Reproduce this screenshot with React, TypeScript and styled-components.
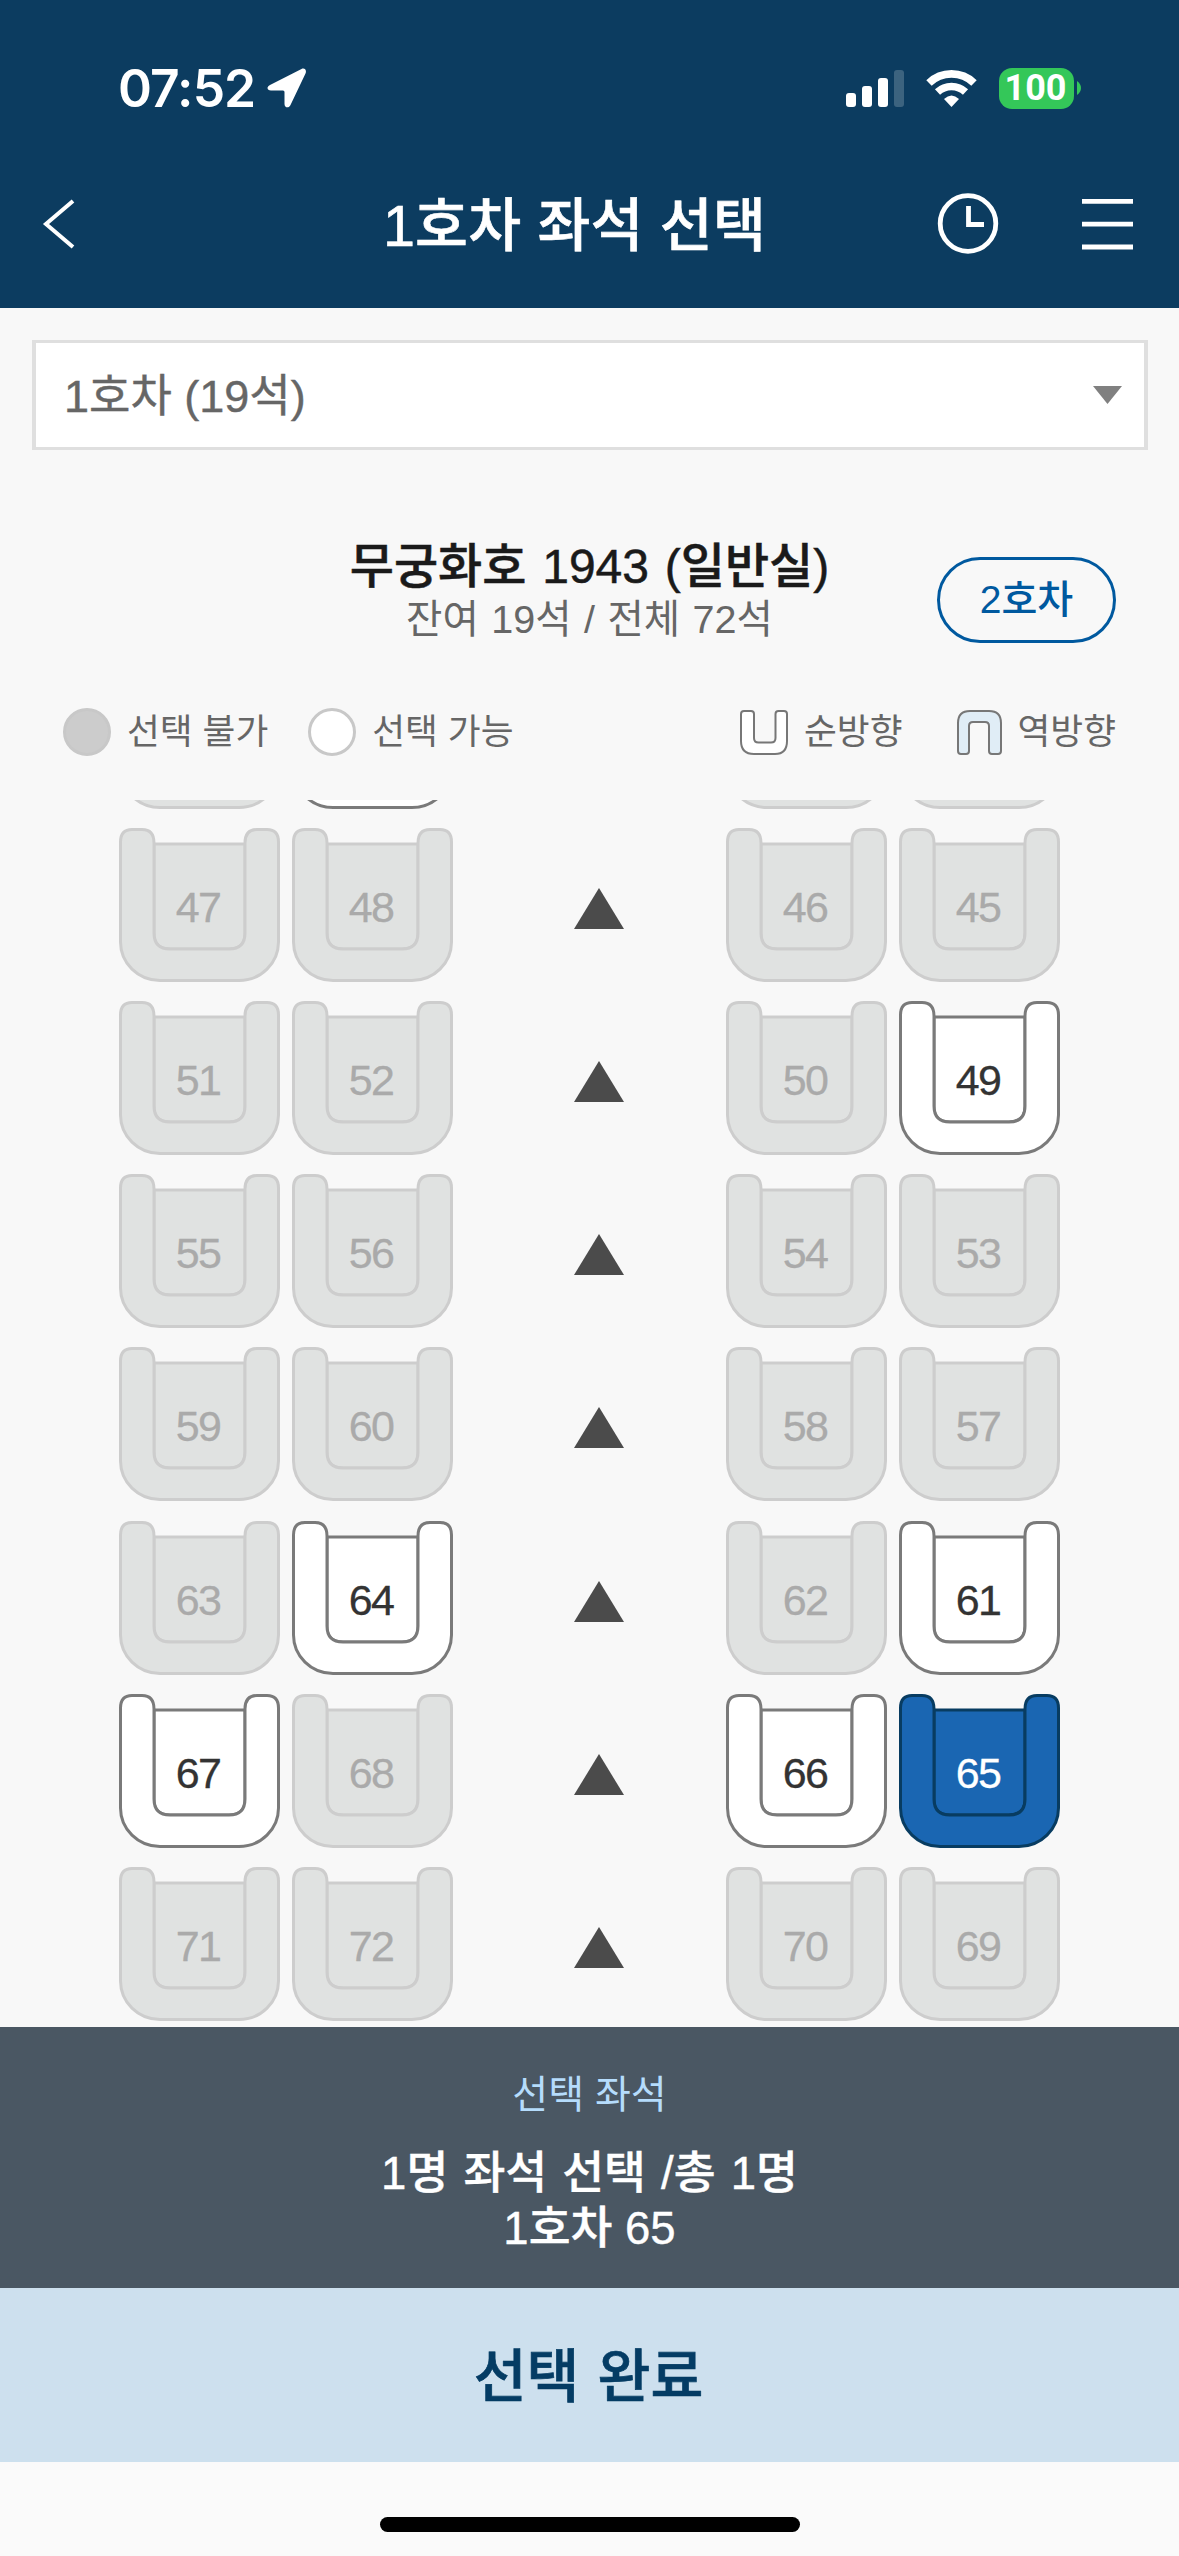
import React, { useState } from 'react';
import styled, { createGlobalStyle } from 'styled-components';

const GlobalStyle = createGlobalStyle`
  * {
    box-sizing: border-box;
  }

  body {
    margin: 0;
    background: #f8f8f8;
    font-family: 'Liberation Sans', 'Noto Sans CJK KR', sans-serif;
  }

  button {
    border: 0;
    padding: 0;
    background: none;
    font-family: inherit;
  }
`;

const Screen = styled.div`
  display: flex;
  flex-direction: column;
  width: 1179px;
  height: 2556px;
  overflow: hidden;
  background: #f8f8f8;
`;

const Header = styled.header`
  height: 308px;
  background: #0c3c60;
  color: #fff;
`;

const StatusBar = styled.div`
  display: flex;
  align-items: center;
  height: 140px;
  padding: 36px 98px 0 118px;
`;

const Time = styled.span`
  width: 149px;
  font-family: Inter, sans-serif;
  font-size: 51.5px;
  font-weight: 600;
  letter-spacing: -0.9px;
  line-height: 60px;
`;

const StatusIcons = styled.div`
  display: flex;
  align-items: center;
  margin-left: auto;
`;

const Battery = styled.div`
  display: flex;
  align-items: center;
  justify-content: center;
  width: 75px;
  height: 41px;
  margin: 0 3px 0 22px;
  padding-right: 2px;
  border-radius: 13px;
  background: #34c759;
  font-family: Roboto, sans-serif;
  font-size: 36px;
  font-weight: 700;
`;

const TitleBar = styled.div`
  display: grid;
  grid-template-columns: 242px 1fr 242px;
  align-items: center;
  height: 168px;
`;

const BackButton = styled.button`
  display: flex;
  padding-left: 42px;
`;

const Title = styled.h1`
  margin: 0;
  padding: 4px 30px 0 0;
  font-size: 57.5px;
  font-weight: 500;
  line-height: 84px;
  letter-spacing: 0.2px;
  text-align: center;
  white-space: nowrap;
  -webkit-text-stroke: 0.6px;
`;

const HeaderActions = styled.div`
  display: flex;
  align-items: center;
  gap: 83px;
  margin-left: -0.5px;
`;

const CarSelect = styled.button`
  display: flex;
  align-items: center;
  justify-content: space-between;
  height: 110px;
  margin: 32px 31px 0 32px;
  padding: 0 22px 0 28px;
  border: solid #dfdfdf;
  border-width: 3px 4px;
  background: #fff;
  color: #666;
  font-size: 45px;
  line-height: 64px;

  span {
    padding-top: 4px;
    -webkit-text-stroke: 0.4px;
  }
`;

const TrainInfo = styled.section`
  display: grid;
  grid-template-columns: 242px 1fr 242px;
  height: 213px;
  padding-top: 85px;
`;

const TrainText = styled.div`
  grid-column: 2;
  text-align: center;
  white-space: nowrap;
`;

const TrainName = styled.h2`
  margin: 0;
  color: #1a1a1a;
  font-size: 48px;
  font-weight: 500;
  line-height: 64px;
  word-spacing: 2.5px;
  -webkit-text-stroke: 0.5px;
`;

const TrainSeats = styled.p`
  margin: 0;
  color: #666;
  font-size: 39.5px;
  line-height: 40px;
  word-spacing: 1.5px;
`;

const NextCarButton = styled.button`
  width: 179px;
  height: 86px;
  margin-top: 22px;
  border: 3px solid #00599f;
  border-radius: 43px;
  color: #00599f;
  font-size: 39px;
  font-weight: 500;
  line-height: 80px;
`;

const Legend = styled.div`
  display: flex;
  align-items: center;
  justify-content: space-between;
  height: 137px;
  padding: 0 63px;
`;

const LegendGroup = styled.div<{ $gap: number }>`
  display: flex;
  gap: ${({ $gap }) => $gap}px;
`;

const LegendItem = styled.div`
  display: flex;
  align-items: center;
  gap: 16px;
  padding-top: 1px;
  color: #666;
  font-size: 35.7px;
  line-height: 50px;
  white-space: nowrap;
`;

const Dot = styled.span<{ $fill: string }>`
  width: 48px;
  height: 48px;
  border: 3px solid #c8c8c8;
  border-radius: 50%;
  background: ${({ $fill }) => $fill};
`;

const SeatMap = styled.main`
  display: flex;
  flex-direction: column;
  justify-content: flex-end;
  height: 1227px;
  overflow: hidden;
  padding: 0 119px;
`;

const SeatRow = styled.div`
  display: grid;
  flex: none;
  grid-template-columns: 334px 1fr 334px;
  height: 173.2px;

  &:last-child {
    height: 160px;
  }
`;

const SeatPair = styled.div`
  display: flex;
  justify-content: space-between;
`;

const Aisle = styled.div`
  display: flex;
  justify-content: center;
  padding: 60px 0 0 19px;
`;

type SeatStatus = 'blocked' | 'open' | 'picked';

const seatColors = {
  blocked: { fill: '#e0e2e1', line: '#cdcdcd', text: '#aaaaaa' },
  open: { fill: '#ffffff', line: '#7a7a7a', text: '#333333' },
  picked: { fill: '#1a66b2', line: '#083c61', text: '#ffffff' },
};

const SeatButton = styled.button<{ $status: SeatStatus }>`
  display: grid;
  width: 161px;
  height: 154px;
  color: ${({ $status }) => seatColors[$status].text};
  font-size: 43px;
  letter-spacing: -1.6px;

  svg,
  span {
    grid-area: 1 / 1;
  }

  svg {
    fill: ${({ $status }) => seatColors[$status].fill};
    stroke: ${({ $status }) => seatColors[$status].line};
  }

  span {
    padding: 54px 3px 0 0;
    line-height: 50px;
    -webkit-text-stroke: 0.3px;
  }
`;

const Summary = styled.section`
  height: 261px;
  padding-top: 38px;
  background: #4a5763;
  color: #fff;
  text-align: center;
`;

const SummaryLabel = styled.p`
  margin: 0 0 21px;
  color: #b5dcfc;
  font-size: 39px;
  line-height: 60px;
`;

const SummaryLine = styled.p<{ $wordSpacing?: number }>`
  margin: 0;
  font-size: 45.5px;
  font-weight: 500;
  line-height: 55px;
  word-spacing: ${({ $wordSpacing = 0 }) => $wordSpacing}px;
  -webkit-text-stroke: 0.4px;
`;

const ConfirmButton = styled.button`
  height: 174px;
  padding: 0 2px 6px 0;
  background: #cde0ee;
  color: #043c64;
  font-size: 57.5px;
  font-weight: 500;
  word-spacing: 2px;
  -webkit-text-stroke: 0.7px;
`;

const HomeArea = styled.footer`
  display: flex;
  justify-content: center;
  height: 94px;
  padding-top: 55px;
  background: #fafafa;
`;

const HomeIndicator = styled.div`
  width: 420px;
  height: 15px;
  border-radius: 8px;
  background: #000;
`;

const rows = [
  [43, 44, 42, 41],
  [47, 48, 46, 45],
  [51, 52, 50, 49],
  [55, 56, 54, 53],
  [59, 60, 58, 57],
  [63, 64, 62, 61],
  [67, 68, 66, 65],
  [71, 72, 70, 69],
];

const openSeats = [44, 49, 61, 64, 65, 66, 67];

// rows before this index are scrolled under the legend
const firstVisibleRow = 1;

function LocationIcon() {
  return (
    <svg width="40" height="40" viewBox="0 0 40 40" fill="#fff">
      <path d="M34.500 1 L3 17 C-.8 19 0 22.500 4 22.500 H16 Q17.500 22.500 17.500 24 V36 C17.500 40 22 40.500 23.500 37 L38.500 5.500 C40 2 37.500 -.5 34.500 1 Z" />
    </svg>
  );
}

function SignalIcon() {
  return (
    <svg width="58" height="37" viewBox="0 0 58 37" fill="#fff">
      <rect x="0" y="23" width="10" height="14" rx="3" />
      <rect x="16" y="16" width="10" height="21" rx="3" />
      <rect x="32" y="8" width="10" height="29" rx="3" />
      <rect x="48" y="0" width="10" height="37" rx="3" opacity="0.2" />
    </svg>
  );
}

function WifiIcon() {
  return (
    <svg width="51" height="37" viewBox="0 0 51 37" fill="none" stroke="#fff">
      <path d="M3 13 A32.500 32.500 0 0 1 48 13" strokeWidth="7.800" />
      <path d="M11.500 22 A20.500 20.500 0 0 1 39.500 22" strokeWidth="7.500" />
      <path d="M25.500 37 L18 29 Q25.500 22 33 29 Z" fill="#fff" stroke="none" />
    </svg>
  );
}

function Seat({
  number,
  status,
  showNumber,
  onClick,
}: {
  number: number;
  status: SeatStatus;
  showNumber: boolean;
  onClick: () => void;
}) {
  return (
    <SeatButton $status={status} disabled={status === 'blocked'} onClick={onClick}>
      <svg width="161" height="154" viewBox="0 0 161 154" strokeWidth="3">
        <path d="M35 16 H126 V106 Q126 121 110 121 H51 Q35 121 35 106 Z" />
        <path d="M1.500 14 Q1.500 1.500 13 1.500 H23 Q35 1.500 35 15 V105 Q35 121 51 121 H110 Q126 121 126 105 V15 Q126 1.500 138 1.500 H148 Q159.500 1.500 159.500 14 V114 C159.500 135 142 152.500 120 152.500 H41 C19 152.500 1.500 135 1.500 114 Z" />
      </svg>
      {showNumber && <span>{number}</span>}
    </SeatButton>
  );
}

function App() {
  const [selected, setSelected] = useState(65);

  const getStatus = (seat: number): SeatStatus => {
    if (seat === selected) return 'picked';
    return openSeats.includes(seat) ? 'open' : 'blocked';
  };

  const renderSeats = (seats: number[], rowIndex: number) =>
    seats.map((seat) => (
      <Seat
        key={seat}
        number={seat}
        status={getStatus(seat)}
        showNumber={rowIndex >= firstVisibleRow}
        onClick={() => setSelected(seat)}
      />
    ));

  return (
    <>
      <GlobalStyle />
      <Screen>
        <Header>
          <StatusBar>
            <Time>07:52</Time>
            <LocationIcon />
            <StatusIcons>
              <SignalIcon />
              <svg width="22" height="1" />
              <WifiIcon />
              <Battery>100</Battery>
              <svg width="4" height="14" viewBox="0 0 4 14" fill="#34c759">
                <path d="M0 0 Q4 3 4 7 Q4 11 0 14 Z" />
              </svg>
            </StatusIcons>
          </StatusBar>
          <TitleBar>
            <BackButton>
              <svg width="34" height="50" viewBox="0 0 34 50" fill="none" stroke="#fff" strokeWidth="4">
                <path d="M31 2 L4 25 L31 48" />
              </svg>
            </BackButton>
            <Title>1호차 좌석 선택</Title>
            <HeaderActions>
              <svg width="62" height="62" viewBox="0 0 62 62" fill="none" stroke="#fff" strokeWidth="4.800">
                <circle cx="31" cy="30.500" r="27.800" />
                <path d="M31.500 13 V31.500 H47" />
              </svg>
              <svg width="51" height="51" viewBox="0 0 51 51" stroke="#fff" strokeWidth="4.800">
                <path d="M0 2.400 H51 M0 25.200 H51 M0 48 H51" />
              </svg>
            </HeaderActions>
          </TitleBar>
        </Header>

        <CarSelect>
          <span>1호차 (19석)</span>
          <svg width="29" height="18" viewBox="0 0 29 18" fill="#808080">
            <path d="M0 0 H29 L14.500 18 Z" />
          </svg>
        </CarSelect>

        <TrainInfo>
          <TrainText>
            <TrainName>무궁화호 1943 (일반실)</TrainName>
            <TrainSeats>잔여 19석 / 전체 72석</TrainSeats>
          </TrainText>
          <NextCarButton>2호차</NextCarButton>
        </TrainInfo>

        <Legend>
          <LegendGroup $gap={40}>
            <LegendItem>
              <Dot $fill="#cccccc" />
              선택 불가
            </LegendItem>
            <LegendItem>
              <Dot $fill="#ffffff" />
              선택 가능
            </LegendItem>
          </LegendGroup>
          <LegendGroup $gap={54}>
            <LegendItem>
              <svg width="48" height="45" viewBox="0 0 48 45" fill="#fff" stroke="#777" strokeWidth="2">
                <path d="M1 4 Q1 1 4 1 H11 Q14 1 14 4 V28 Q14 32.500 18.500 32.500 H31 Q35.500 32.500 35.500 28 V4 Q35.500 1 38.500 1 H44 Q47 1 47 4 V31 Q47 44 35 44 H14 Q1 44 1 31 Z" />
              </svg>
              순방향
            </LegendItem>
            <LegendItem>
              <svg width="45" height="45" viewBox="0 0 45 45" fill="#e0edf6" stroke="#777" strokeWidth="2">
                <path d="M1 41 Q1 44 4 44 H9 Q12 44 12 41 V16 Q12 12 16 12 H28 Q32 12 32 16 V41 Q32 44 35 44 H41 Q44 44 44 41 V13 Q44 1 32 1 H13 Q1 1 1 13 Z" />
              </svg>
              역방향
            </LegendItem>
          </LegendGroup>
        </Legend>

        <SeatMap>
          {rows.map((row, index) => (
            <SeatRow key={row[0]}>
              <SeatPair>{renderSeats(row.slice(0, 2), index)}</SeatPair>
              <Aisle>
                <svg width="50" height="41" viewBox="0 0 50 41" fill="#4b4b4b">
                  <path d="M25 0 L50 41 H0 Z" />
                </svg>
              </Aisle>
              <SeatPair>{renderSeats(row.slice(2), index)}</SeatPair>
            </SeatRow>
          ))}
        </SeatMap>

        <Summary>
          <SummaryLabel>선택 좌석</SummaryLabel>
          <SummaryLine $wordSpacing={2.5}>1명 좌석 선택 /총 1명</SummaryLine>
          <SummaryLine>1호차 {selected}</SummaryLine>
        </Summary>
        <ConfirmButton>선택 완료</ConfirmButton>
        <HomeArea>
          <HomeIndicator />
        </HomeArea>
      </Screen>
    </>
  );
}

export default App;
